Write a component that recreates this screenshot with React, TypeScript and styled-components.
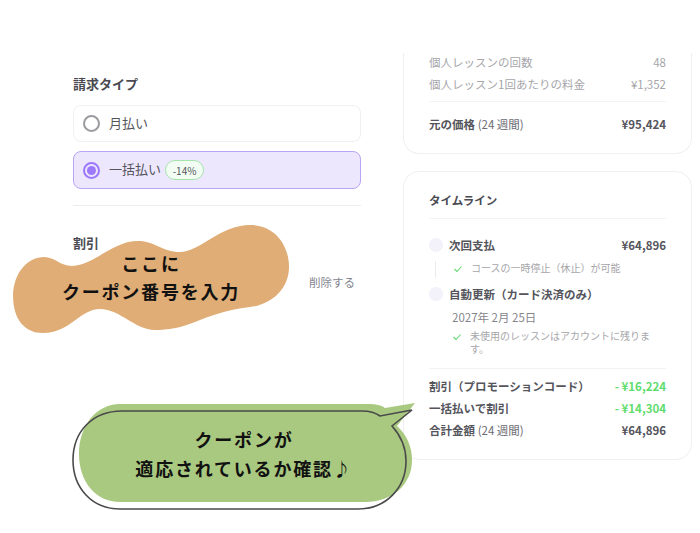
import React from "react";
import styled, { createGlobalStyle } from "styled-components";

const GlobalStyle = createGlobalStyle`
  html, body {
    margin: 0;
    padding: 0;
    background: #fff;
  }
  body {
    font-family: "Noto Sans CJK JP", "Noto Sans", sans-serif;
  }
`;

const Page = styled.div`
  position: relative;
  width: 700px;
  height: 533px;
  overflow: hidden;
  display: flex;
  align-items: flex-start;
  background: #fff;
  padding: 53px 8px 0 73px;
  box-sizing: border-box;
`;

const LeftColumn = styled.div`
  width: 288px;
  padding-top: 22px;
  margin-right: 42px;
  flex-shrink: 0;
`;

const RightColumn = styled.div`
  width: 289px;
  display: flex;
  flex-direction: column;
  gap: 17px;
`;

const SectionTitle = styled.div`
  font-size: 13px;
  line-height: 18px;
  font-weight: 700;
  color: #4a4a52;
`;

const Options = styled.div`
  display: flex;
  flex-direction: column;
  gap: 9px;
  margin-top: 12px;
`;

const Option = styled.div<{ $active?: boolean }>`
  height: ${(p) => (p.$active ? "38px" : "37px")};
  box-sizing: border-box;
  display: flex;
  align-items: center;
  padding-left: 9px;
  border-radius: 8px;
  border: ${(p) => (p.$active ? "1.5px solid #b9a5f5" : "1px solid #f0f0f3")};
  background: ${(p) => (p.$active ? "#ede7fd" : "#fff")};
`;

const Radio = styled.span<{ $active?: boolean }>`
  width: 17px;
  height: 17px;
  box-sizing: border-box;
  border-radius: 50%;
  border: 2px solid ${(p) => (p.$active ? "#9c78fb" : "#9b9b9f")};
  margin-right: 9px;
  display: flex;
  align-items: center;
  justify-content: center;
  &::after {
    content: "";
    display: ${(p) => (p.$active ? "block" : "none")};
    width: 9px;
    height: 9px;
    border-radius: 50%;
    background: #9c78fb;
  }
`;

const OptionLabel = styled.span`
  font-size: 13px;
  line-height: 18px;
  padding-bottom: 2px;
  color: #55555c;
`;

const Badge = styled.span`
  margin-left: 4px;
  height: 20px;
  width: 39px;
  box-sizing: border-box;
  border-radius: 10px;
  border: 1px solid #a5e4ac;
  background: #f2fdf3;
  color: #55555c;
  font-size: 10px;
  display: flex;
  align-items: center;
  justify-content: center;
`;

const Divider = styled.div`
  height: 1px;
  background: #ececef;
  margin: 16px 0 28px;
`;

const DiscountRow = styled.div`
  display: flex;
  justify-content: flex-end;
  margin-top: 21px;
  padding-right: 6px;
`;

const RemoveLink = styled.span`
  font-size: 11.5px;
  line-height: 18px;
  color: #85858f;
`;

const Card = styled.div<{ $cropped?: boolean }>`
  box-sizing: border-box;
  padding: ${(p) => (p.$cropped ? "0 25px 0" : "19px 25px 0")};
  height: ${(p) => (p.$cropped ? "101px" : "289px")};
  border: 1px solid #f0f0f3;
  border-top: ${(p) => (p.$cropped ? "none" : "1px solid #f0f0f3")};
  border-radius: ${(p) => (p.$cropped ? "0 0 16px 16px" : "16px")};
`;

const Row = styled.div<{ $height?: number }>`
  display: flex;
  justify-content: space-between;
  align-items: center;
  height: ${(p) => p.$height ?? 22}px;
`;

const MutedText = styled.span`
  font-size: 11.5px;
  color: #a6a6aa;
`;

const StrongText = styled.span<{ $green?: boolean }>`
  font-size: 11.5px;
  font-weight: 700;
  color: ${(p) => (p.$green ? "#5fdc6e" : "#55555c")};
`;

const LightPart = styled.span`
  font-weight: 400;
  color: #6b6b73;
`;

const ThinRule = styled.div<{ $top?: number; $bottom?: number }>`
  height: 1px;
  background: #f3f3f5;
  margin-top: ${(p) => p.$top ?? 0}px;
  margin-bottom: ${(p) => p.$bottom ?? 0}px;
`;

const CardTitle = styled.div`
  font-size: 11.5px;
  line-height: 18px;
  font-weight: 700;
  color: #4a4a52;
`;

const StepHead = styled.div`
  display: flex;
  align-items: center;
  height: 20px;
`;

const Dot = styled.span`
  width: 14px;
  height: 14px;
  border-radius: 50%;
  background: #f3f2fb;
  margin-right: 6px;
  flex-shrink: 0;
`;

const StepTitle = styled(StrongText)`
  flex: 1;
`;

const LineNote = styled.div`
  display: flex;
  align-items: flex-start;
  height: 17px;
  margin: 6px 0 6px 6px;
  padding-left: 17px;
  border-left: 1px solid #ececef;
`;

const PlainNote = styled.div`
  display: flex;
  align-items: flex-start;
  margin-left: 23px;
`;

const NoteText = styled.span<{ $wrap?: boolean }>`
  font-size: 10px;
  line-height: 13px;
  color: #a6a6aa;
  margin-left: 8px;
  width: ${(p) => (p.$wrap ? "186px" : "auto")};
`;

const DateText = styled.div`
  font-size: 11.5px;
  line-height: 18px;
  color: #85858c;
  margin: 4px 0 3px 23px;
`;

const Totals = styled.div`
  display: flex;
  flex-direction: column;
`;

const Overlay = styled.svg`
  position: absolute;
  left: 0;
  top: 0;
`;

const Callout = styled.div<{ $left: number; $top: number; $width: number; $line: number }>`
  position: absolute;
  left: ${(p) => p.$left}px;
  top: ${(p) => p.$top}px;
  width: ${(p) => p.$width}px;
  text-align: center;
  font-size: 18px;
  line-height: ${(p) => p.$line}px;
  font-weight: 700;
  letter-spacing: 1.8px;
  color: #111;
  font-family: "Noto Sans CJK JP", serif;
`;

const Check = () => (
  <svg width="10" height="14" viewBox="0 0 10 14" fill="none" style={{ flexShrink: 0 }}>
    <path d="M1.5 8 L4 10.5 L8.5 5.5" stroke="#62d96f" strokeWidth="1.1" />
  </svg>
);

export default function App() {
  return (
    <Page>
      <GlobalStyle />
      <LeftColumn>
        <SectionTitle>請求タイプ</SectionTitle>
        <Options>
          <Option>
            <Radio />
            <OptionLabel>月払い</OptionLabel>
          </Option>
          <Option $active>
            <Radio $active />
            <OptionLabel>一括払い</OptionLabel>
            <Badge>-14%</Badge>
          </Option>
        </Options>
        <Divider />
        <SectionTitle>割引</SectionTitle>
        <DiscountRow>
          <RemoveLink>削除する</RemoveLink>
        </DiscountRow>
      </LeftColumn>
      <RightColumn>
        <Card $cropped>
          <Row $height={18}>
            <MutedText>個人レッスンの回数</MutedText>
            <MutedText>48</MutedText>
          </Row>
          <Row $height={26}>
            <MutedText>個人レッスン1回あたりの料金</MutedText>
            <MutedText>¥1,352</MutedText>
          </Row>
          <ThinRule $top={4} $bottom={11} />
          <Row>
            <StrongText>
              元の価格 <LightPart>(24 週間)</LightPart>
            </StrongText>
            <StrongText>¥95,424</StrongText>
          </Row>
        </Card>
        <Card>
          <CardTitle>タイムライン</CardTitle>
          <ThinRule $top={9} $bottom={16} />
          <StepHead>
            <Dot />
            <StepTitle>次回支払</StepTitle>
            <StrongText>¥64,896</StrongText>
          </StepHead>
          <LineNote>
            <Check />
            <NoteText>コースの一時停止（休止）が可能</NoteText>
          </LineNote>
          <StepHead>
            <Dot />
            <StepTitle>自動更新（カード決済のみ）</StepTitle>
          </StepHead>
          <DateText>2027年 2月 25日</DateText>
          <PlainNote>
            <Check />
            <NoteText $wrap>未使用のレッスンはアカウントに残ります。</NoteText>
          </PlainNote>
          <ThinRule $top={13} $bottom={6} />
          <Totals>
            <Row>
              <StrongText>割引（プロモーションコード）</StrongText>
              <StrongText $green>- ¥16,224</StrongText>
            </Row>
            <Row>
              <StrongText>一括払いで割引</StrongText>
              <StrongText $green>- ¥14,304</StrongText>
            </Row>
            <Row>
              <StrongText>
                合計金額 <LightPart>(24 週間)</LightPart>
              </StrongText>
              <StrongText>¥64,896</StrongText>
            </Row>
          </Totals>
        </Card>
      </RightColumn>

      <Overlay width="700" height="533" viewBox="0 0 700 533">
        <path
          d="M13 295 C14 272 28 257 44 257 C55 257 60 266 72 266 C95 265 112 241 138 241 C155 241 162 252 180 252 C200 252 220 225 250 225 C275 225 289 245 289 267 C289 290 270 305 250 307 C225 310 210 316 195 322 C180 328 168 330 155 330 C135 330 120 309 100 309 C80 309 70 333 43 333 C25 333 13 320 13 295 Z"
          fill="#dfad75"
        />
        <path
          d="M120 404 L370 404 C376 404 381 405 385 408 L415 403 L397 426 C407 435 412 447 412 460 C412 485 392 502 365 502 L120 502 C96 502 79 482 79 454 C79 426 96 404 120 404 Z"
          fill="#a9c880"
        />
        <path
          d="M122 411 L362 411 C370 411 376 413 380 416 L412 410 L392 426 C401 436 406 448 406 461 C406 488 386 509 358 509 L120 509 C92 509 73 488 73 460 C73 432 92 411 122 411 Z"
          fill="none"
          stroke="#4a4a4a"
          strokeWidth="1.6"
        />
      </Overlay>
      <Callout $left={13} $top={249} $width={276} $line={28}>
        ここに
        <br />
        クーポン番号を入力
      </Callout>
      <Callout $left={84} $top={425} $width={320} $line={29}>
        クーポンが
        <br />
        適応されているか確認♪
      </Callout>
    </Page>
  );
}
